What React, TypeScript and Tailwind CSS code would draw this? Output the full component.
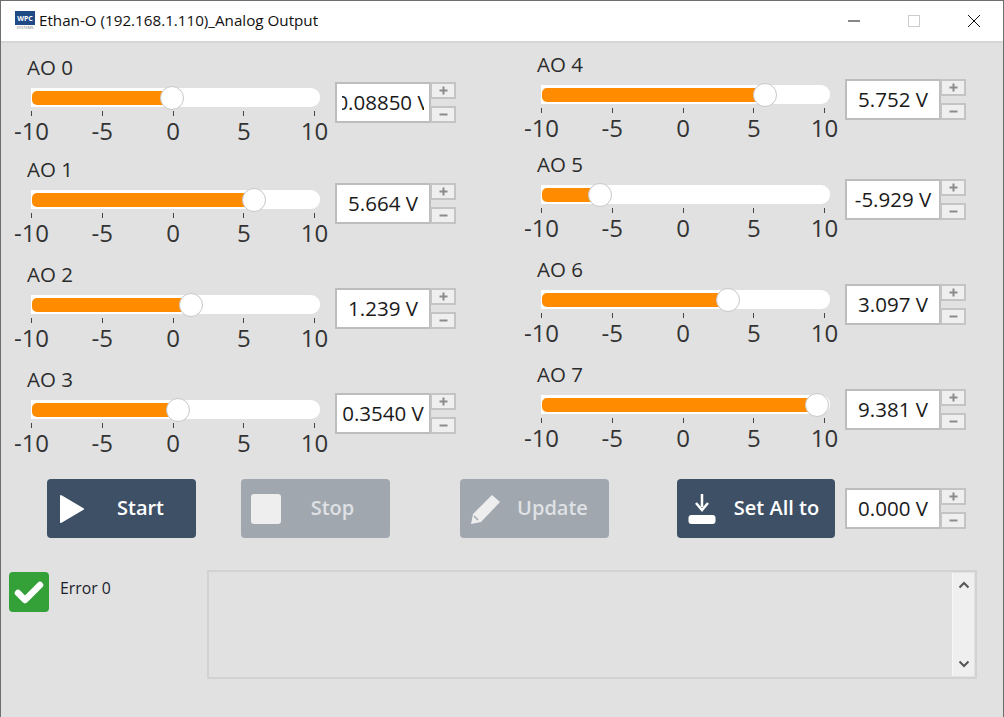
import React from "react";

const font = { fontFamily: '"Open Sans", "Noto Sans", sans-serif' };

function Spin({ text }: { text: string }) {
  return (
    <div className="flex h-[41px]">
      <div className="flex h-[41px] w-[96px] items-center justify-center border-2 border-[#bdbdbd] bg-white text-[20.5px] text-[#1a1a1a]">
        <div className="flex w-[82px] justify-center overflow-hidden whitespace-nowrap">
          <span className="shrink-0">{text}</span>
        </div>
      </div>
      <div className="ml-[-1px] flex h-[41px] w-[26px] flex-col justify-between">
        <div className="flex h-[17px] items-center justify-center border-2 border-[#c4c4c4] bg-[#efefef]">
          <svg width="9" height="9" viewBox="0 0 9 9"><path d="M3.5 0.5h2v3h3v2h-3v3h-2v-3h-3v-2h3z" fill="#8c8c8c" /></svg>
        </div>
        <div className="flex h-[17px] items-center justify-center border-2 border-[#c4c4c4] bg-[#efefef]">
          <svg width="9" height="9" viewBox="0 0 9 9"><path d="M0.5 3.5h8v2h-8z" fill="#8c8c8c" /></svg>
        </div>
      </div>
    </div>
  );
}

function Channel({ name, value, text, gap, spinTop }: { name: string; value: number; text: string; gap: string; spinTop: string }) {
  const center = 142.9 + value * 14.15;
  return (
    <div className={`flex ${gap}`}>
      <div className="w-[308px] shrink-0">
        <div className="h-[22px] text-[20.5px] leading-[20px] text-[#2b2b2b]">{name}</div>
        <div className="relative ml-[4px] mt-[9px] h-[19px] w-[289px] rounded-r-[9px] bg-white">
          <div className="absolute left-[1px] top-[2.5px] h-[14px] rounded-[5px] bg-[#ff8c00]" style={{ width: center - 1 }} />
          <div className="absolute top-[-2px] h-[24px] w-[24px] rounded-full border-[1.5px] border-[#c6c6c6] bg-white" style={{ left: center - 12 }} />
        </div>
        <div className="mb-[2px] ml-[4px] mt-[4px] flex w-[284px] justify-between">
          {["-10", "-5", "0", "5", "10"].map((t) => (
            <div key={t} className="flex w-[1px] flex-col items-center">
              <div className="h-[5px] w-[1px] shrink-0 bg-[#444444]" />
              <div className="mt-[1px] whitespace-nowrap text-[24px] leading-[28px] text-[#333333]">{t}</div>
            </div>
          ))}
        </div>
      </div>
      <div className={spinTop}><Spin text={text} /></div>
    </div>
  );
}

function ActionButton({ label, icon, off, width, pad }: { label: string; icon: React.ReactNode; off?: boolean; width: string; pad: string }) {
  return (
    <div className={`flex h-[59px] ${width} items-center rounded-[4px] text-[20px] font-semibold ${off ? "bg-[#a0a7af] text-[#dfe1e4]" : "bg-[#3e5066] text-white"}`}>
      <div className="flex w-[50px] shrink-0 justify-center">{icon}</div>
      <div className={`flex-1 pb-[2px] text-center ${pad}`}>{label}</div>
    </div>
  );
}

export default function App() {
  return (
    <div className="flex h-[717px] w-[1004px] flex-col overflow-hidden border-x border-t border-x-[#6e6e6e] border-t-[#6e6e6e] bg-[#e1e1e1]" style={font}>
      <div className="flex h-[42px] shrink-0 items-center border-b-2 border-[#d6d6d6] bg-white">
        <div className="ml-[14px] flex h-[20px] w-[20px] flex-col items-center overflow-hidden">
          <div className="flex h-[14px] w-[20px] items-center justify-center bg-[#1f4a86] text-[7px] font-bold leading-none text-white">WPC</div>
          <div className="text-[4px] leading-[6px] text-[#777777]">SYSTEMS</div>
        </div>
        <div className="ml-[4px] flex-1 whitespace-nowrap pb-[2px] text-[15.2px] text-[#111111]">Ethan-O (192.168.1.110)_Analog Output</div>
        <svg width="12" height="2" viewBox="0 0 12 2" className="mr-[48px]"><path d="M0 1h12" stroke="#111111" /></svg>
        <svg width="12" height="12" viewBox="0 0 12 12" className="mr-[47px]"><rect x="0.5" y="0.5" width="11" height="11" fill="none" stroke="#cccccc" /></svg>
        <svg width="14" height="14" viewBox="0 0 14 14" className="mr-[22px]"><path d="M1 1l12 12M13 1L1 13" stroke="#111111" /></svg>
      </div>

      <div className="flex shrink-0">
        <div className="w-[510px] shrink-0 pl-[26px] pt-[14px]">
          <Channel name="AO 0" value={-0.16} text="0.08850 V" gap="mb-[12px]" spinTop="mt-[25px]" />
          <Channel name="AO 1" value={5.664} text="5.664 V" gap="mb-[15px]" spinTop="mt-[24px]" />
          <Channel name="AO 2" value={1.239} text="1.239 V" gap="mb-[15px]" spinTop="mt-[24px]" />
          <Channel name="AO 3" value={0.3} text="0.3540 V" gap="" spinTop="mt-[24px]" />
        </div>
        <div className="flex-1 pl-[26px] pt-[11px]">
          <Channel name="AO 4" value={5.752} text="5.752 V" gap="mb-[10px]" spinTop="mt-[25px]" />
          <Channel name="AO 5" value={-5.929} text="-5.929 V" gap="mb-[15px]" spinTop="mt-[25px]" />
          <Channel name="AO 6" value={3.097} text="3.097 V" gap="mb-[15px]" spinTop="mt-[25px]" />
          <Channel name="AO 7" value={9.381} text="9.381 V" gap="" spinTop="mt-[25px]" />
        </div>
      </div>

      <div className="mt-[20px] flex shrink-0 items-center pl-[46px]">
        <ActionButton
          label="Start"
          width="w-[149px]"
          pad="pr-[12px]"
          icon={<svg width="26" height="30" viewBox="0 0 26 30"><path d="M2 2L24 15L2 28Z" fill="#ffffff" stroke="#ffffff" strokeWidth="2" strokeLinejoin="round" /></svg>}
        />
        <div className="ml-[45px]">
          <ActionButton
            label="Stop"
            off
            width="w-[149px]"
            pad="pr-[16px]"
            icon={<div className="h-[30px] w-[30px] rounded-[3px] bg-[#eeeeee]" />}
          />
        </div>
        <div className="ml-[70px]">
          <ActionButton
            label="Update"
            off
            width="w-[149px]"
            pad="pr-[14px]"
            icon={<svg width="32" height="32" viewBox="0 0 32 32"><path d="M23 2l8 7-19 20-10 2 2-10z" fill="#eeeeee" /><path d="M5 23l4 4" stroke="#a0a7af" strokeWidth="1.5" /></svg>}
          />
        </div>
        <div className="ml-[68px]">
          <ActionButton
            label="Set All to"
            width="w-[158px]"
            pad="pr-[9px]"
            icon={<svg width="28" height="32" viewBox="0 0 28 32"><rect x="0.5" y="22" width="27" height="9" rx="3" fill="#ffffff" /><path d="M14 1v13" stroke="#ffffff" strokeWidth="2.5" /><path d="M8 10l6 7 6-7" fill="none" stroke="#ffffff" strokeWidth="2.5" /></svg>}
          />
        </div>
        <div className="ml-[10px]"><Spin text="0.000 V" /></div>
      </div>

      <div className="mt-[32px] flex shrink-0">
        <div className="ml-[8px] mt-[2px] flex h-[40px] w-[40px] items-center justify-center rounded-[4px] bg-[#34a038]">
          <svg width="32" height="28" viewBox="0 0 32 28"><path d="M5 15l7 7L27 7" fill="none" stroke="#ffffff" strokeWidth="6.5" strokeLinecap="round" strokeLinejoin="round" /></svg>
        </div>
        <div className="ml-[11px] w-[147px] pt-[8px] text-[15.8px] leading-[20px] text-[#1c1c2c]">Error 0</div>
        <div className="flex h-[109px] w-[770px] justify-end border-2 border-[#d2d2d2] p-[1px]">
          <div className="flex w-[22px] flex-col items-center justify-between border-l border-[#f7f7f7] bg-[#efefef] py-[8px]">
            <svg width="12" height="8" viewBox="0 0 12 8"><path d="M1.5 6.5L6 2l4.5 4.5" fill="none" stroke="#555555" strokeWidth="2" /></svg>
            <svg width="12" height="8" viewBox="0 0 12 8"><path d="M1.5 1.5L6 6l4.5-4.5" fill="none" stroke="#555555" strokeWidth="2" /></svg>
          </div>
        </div>
      </div>
    </div>
  );
}
